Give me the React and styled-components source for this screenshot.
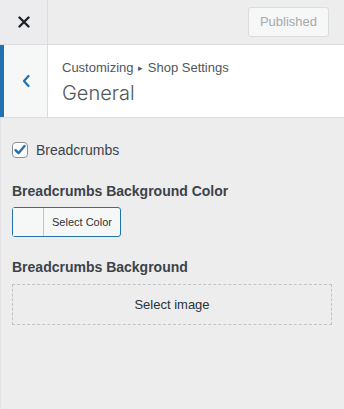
import React from 'react';
import styled, { createGlobalStyle } from 'styled-components';

const GlobalStyle = createGlobalStyle`
    html, body {
        margin: 0;
        padding: 0;
        background: #f0f0f1;
    }
    body {
        font-family: "Liberation Sans", Arial, sans-serif;
        color: #1d2327;
    }
`;

const Panel = styled.div`
    width: 344px;
    height: 409px;
    background: #ededee;
    border-left: 1px solid #e2e2e4;
    box-sizing: border-box;
    display: flex;
    flex-direction: column;
`;

const TopBar = styled.div`
    height: 45px;
    display: flex;
    align-items: stretch;
    border-bottom: 1px solid #dcdcde;
    box-sizing: border-box;
    margin-left: -1px;
`;

const CloseButton = styled.button`
    width: 48px;
    border: none;
    border-right: 1px solid #dcdcde;
    background: #ececee;
    display: flex;
    align-items: center;
    justify-content: center;
    padding: 0;
    color: #1d2327;
`;

const TopActions = styled.div`
    flex: 1;
    display: flex;
    align-items: center;
    justify-content: flex-end;
    padding-right: 15px;
`;

const PublishButton = styled.button`
    width: 81px;
    height: 30px;
    margin-top: -1px;
    border: 1px solid #dcdcde;
    border-radius: 3px;
    background: #f6f7f7;
    color: #a7aaad;
    font-family: inherit;
    font-size: 13px;
`;

const SectionHeader = styled.div`
    height: 73px;
    display: flex;
    background: #ffffff;
    border-bottom: 1px solid #dcdcde;
    box-sizing: border-box;
    margin-left: -1px;
`;

const BackButton = styled.button`
    width: 48px;
    border: none;
    border-left: 4px solid #2271b1;
    border-right: 1px solid #dcdcde;
    background: #f6f7f7;
    color: #2271b1;
    display: flex;
    align-items: center;
    justify-content: center;
    padding: 0;
`;

const Titles = styled.div`
    padding: 14px 0 0 14px;
    display: flex;
    flex-direction: column;
`;

const Crumb = styled.span`
    font-size: 13px;
    color: #50575e;
    line-height: 18px;
`;

const Arrow = styled.span`
    font-size: 9px;
    margin: 0 1px;
    vertical-align: 1px;
`;

const Title = styled.h3`
    margin: 3px 0 0;
    font-family: Inter, "Liberation Sans", sans-serif;
    font-size: 20px;
    font-weight: 300;
    color: #50575e;
    line-height: 26px;
`;

const Content = styled.div`
    padding: 24px 11px 0 11px;
    display: flex;
    flex-direction: column;
`;

const CheckRow = styled.label`
    display: flex;
    align-items: center;
    gap: 8px;
    font-size: 14px;
    color: #3c434a;
    margin-bottom: 24px;
`;

const CheckBox = styled.span`
    width: 16px;
    height: 16px;
    border: 1px solid #8c8f94;
    border-radius: 4px;
    background: #fff;
    box-sizing: border-box;
    display: flex;
    align-items: center;
    justify-content: center;
`;

const ControlTitle = styled.div`
    font-size: 14px;
    font-weight: 700;
    color: #3c434a;
    line-height: 18px;
    margin-bottom: ${p => p.$gap}px;
`;

const ColorButton = styled.button`
    width: 109px;
    height: 30px;
    padding: 0;
    border: 1px solid #2271b1;
    border-radius: 3px;
    background: #f6f7f7;
    display: flex;
    align-items: stretch;
    margin-bottom: 21px;
`;

const Swatch = styled.span`
    width: 30px;
    border-right: 1px solid #c3c4c7;
    background: #f6f7f7;
`;

const ColorLabel = styled.span`
    flex: 1;
    display: flex;
    align-items: center;
    justify-content: center;
    font-family: "Liberation Sans", Arial, sans-serif;
    font-size: 11px;
    color: #2c3338;
`;

const ImagePlaceholder = styled.button`
    width: 320px;
    height: 41px;
    border: 1px dashed #c3c4c7;
    background: transparent;
    font-family: inherit;
    font-size: 13px;
    color: #2c3338;
`;

export default function App() {
    return (
        <>
            <GlobalStyle />
            <Panel>
                <TopBar>
                    <CloseButton>
                        <svg width="12" height="12" viewBox="0 0 12 12">
                            <path d="M1.5 1.5L10.5 10.5M10.5 1.5L1.5 10.5" stroke="#1d2327" strokeWidth="2.4" strokeLinecap="round" />
                        </svg>
                    </CloseButton>
                    <TopActions>
                        <PublishButton>Published</PublishButton>
                    </TopActions>
                </TopBar>
                <SectionHeader>
                    <BackButton>
                        <svg width="10" height="14" viewBox="0 0 10 14">
                            <path d="M7.5 2L3 7l4.5 5" stroke="#2271b1" strokeWidth="2.2" fill="none" strokeLinecap="round" strokeLinejoin="round" />
                        </svg>
                    </BackButton>
                    <Titles>
                        <Crumb>Customizing <Arrow>▸</Arrow> Shop Settings</Crumb>
                        <Title>General</Title>
                    </Titles>
                </SectionHeader>
                <Content>
                    <CheckRow>
                        <CheckBox>
                            <svg width="14" height="14" viewBox="0 0 14 14">
                                <path d="M2.5 7.2l3 3L11.5 3" stroke="#2271b1" strokeWidth="2.4" fill="none" strokeLinecap="round" strokeLinejoin="round" />
                            </svg>
                        </CheckBox>
                        Breadcrumbs
                    </CheckRow>
                    <ControlTitle $gap={7}>Breadcrumbs Background Color</ControlTitle>
                    <ColorButton>
                        <Swatch />
                        <ColorLabel>Select Color</ColorLabel>
                    </ColorButton>
                    <ControlTitle $gap={8}>Breadcrumbs Background</ControlTitle>
                    <ImagePlaceholder>Select image</ImagePlaceholder>
                </Content>
            </Panel>
        </>
    );
}
